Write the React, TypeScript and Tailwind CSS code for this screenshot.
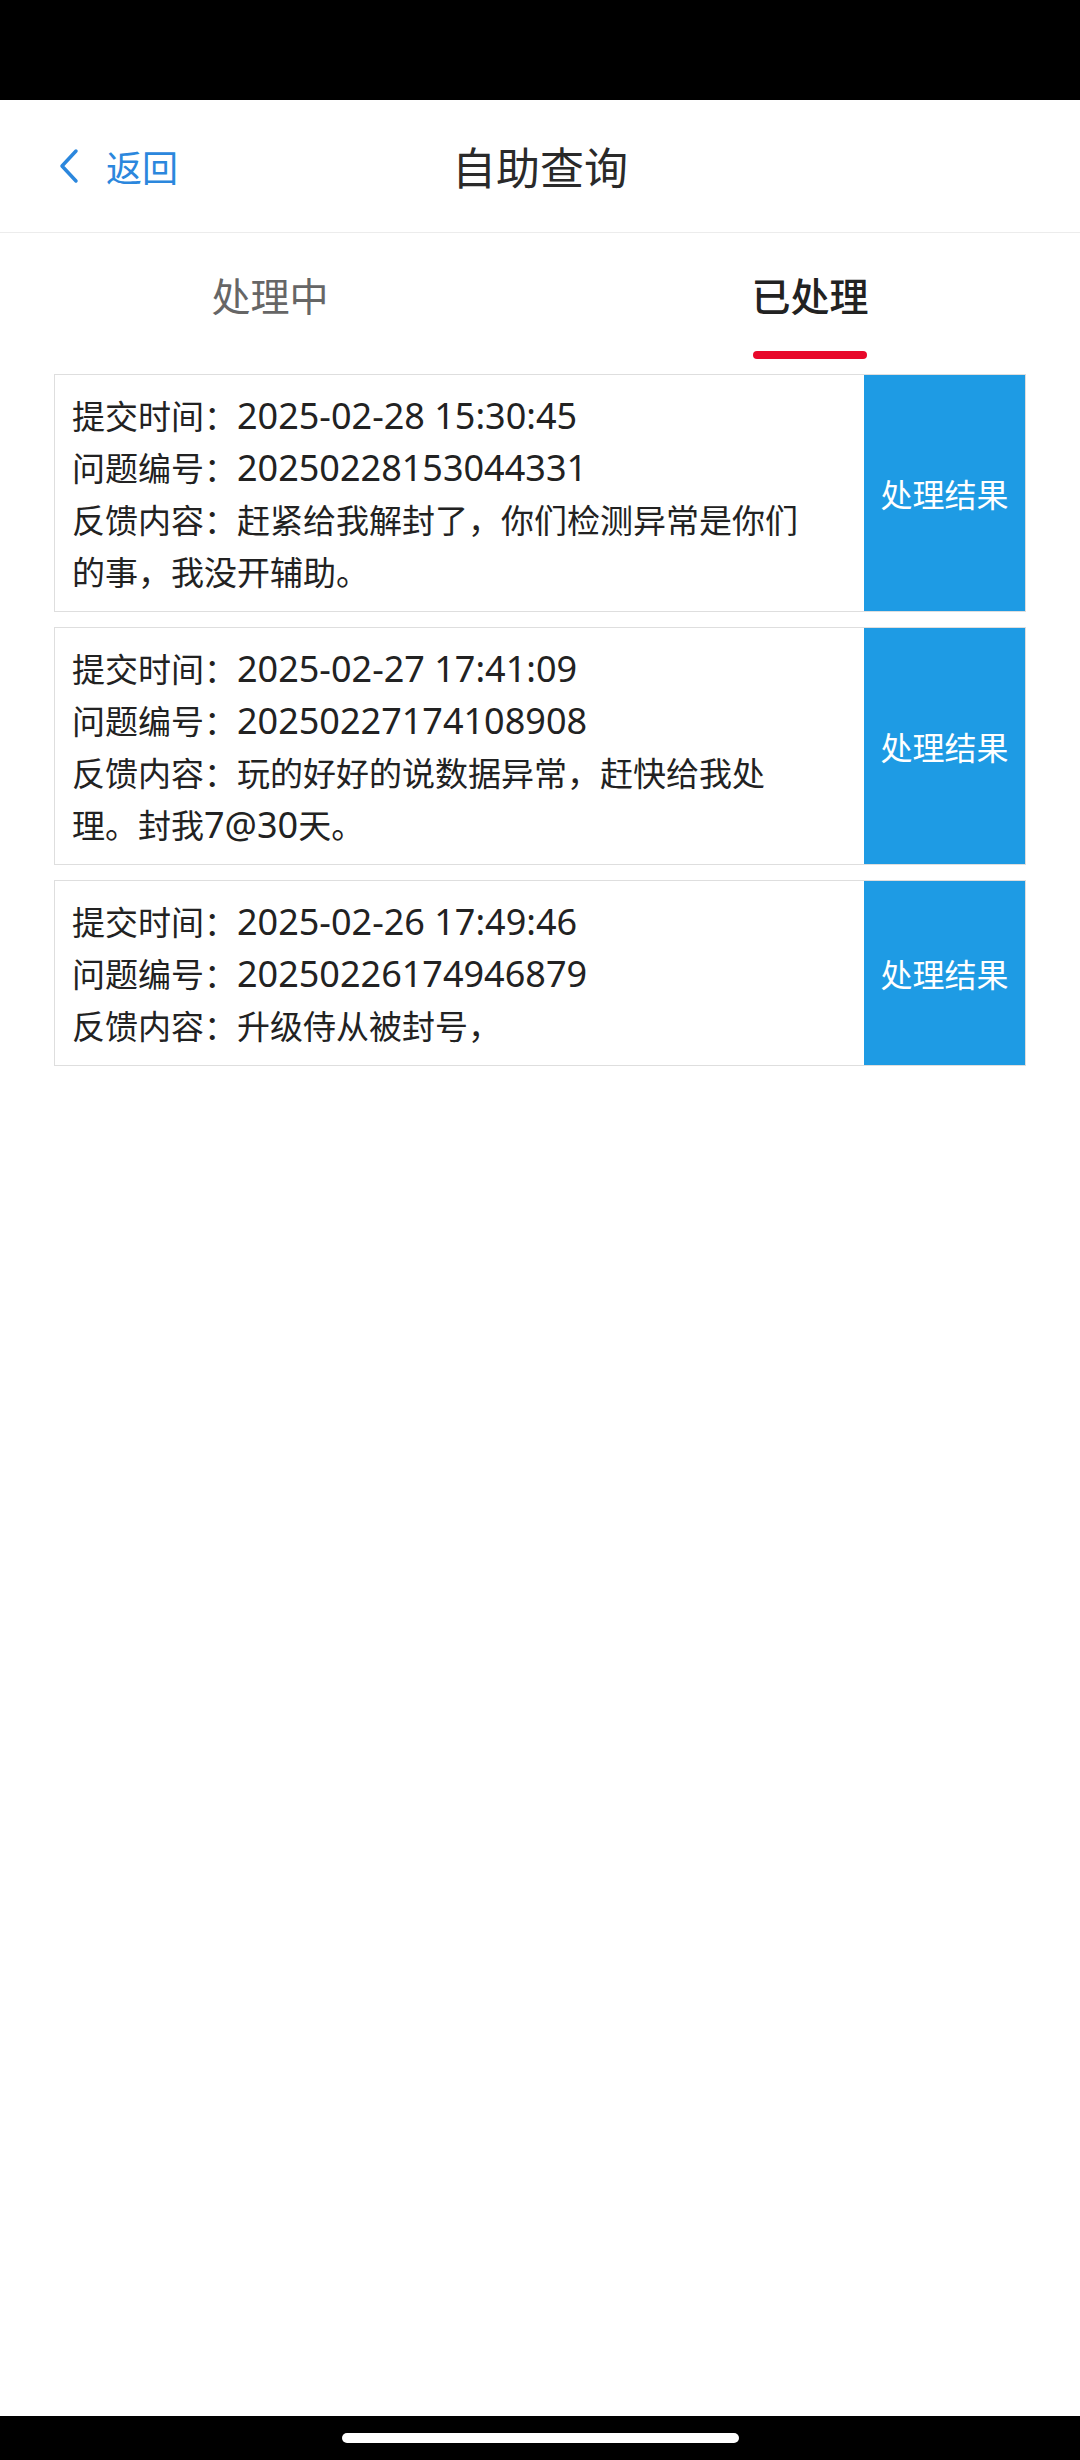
import React from 'react';

const Num = ({ children }: { children: React.ReactNode }) => (
  <span className="text-[36px] leading-[40px]" style={{ fontFamily: '"Noto Sans", "Noto Sans CJK SC", sans-serif' }}>
    {children}
  </span>
);

const records = [
  {
    time: '2025-02-28 15:30:45',
    id: '20250228153044331',
    content: <>赶紧给我解封了，你们检测异常是你们的事，我没开辅助。</>,
  },
  {
    time: '2025-02-27 17:41:09',
    id: '20250227174108908',
    content: (
      <>
        玩的好好的说数据异常，赶快给我处理。封我<Num>7@30</Num>天。
      </>
    ),
  },
  {
    time: '2025-02-26 17:49:46',
    id: '20250226174946879',
    content: <>升级侍从被封号，</>,
  },
];

function RecordCard({ time, id, content }: { time: string; id: string; content: React.ReactNode }) {
  return (
    <div className="flex border border-[#dedede] bg-white">
      <div className="flex-1 pl-[17px] py-[14px] text-[33px] leading-[52px] text-[#222]">
        <div className="w-[745px]">
          <p>
            提交时间：<Num>{time}</Num>
          </p>
          <p>
            问题编号：<Num>{id}</Num>
          </p>
          <p>反馈内容：{content}</p>
        </div>
      </div>
      <button className="w-[161px] shrink-0 bg-[#1e9be4] text-white text-[32px] flex items-center justify-center">
        处理结果
      </button>
    </div>
  );
}

export default function App() {
  return (
    <div
      className="min-h-[2460px] flex flex-col bg-white"
      style={{ fontFamily: '"Noto Sans CJK SC", "Noto Sans", sans-serif' }}
    >
      <div className="h-[100px] bg-black" />

      <div className="h-[133px] grid grid-cols-[1fr_auto_1fr] items-center border-b border-[#ececec]">
        <div className="flex items-center pl-[58px] gap-[26px] text-[#2b87dd]">
          <svg width="22" height="36" viewBox="0 0 22 36" fill="none">
            <path d="M18 3 L4 18 L18 33" stroke="#2b87dd" strokeWidth="3.5" strokeLinecap="round" strokeLinejoin="round" />
          </svg>
          <span className="text-[36px] leading-none">返回</span>
        </div>
        <h1 className="text-[44px] leading-none text-[#2a2a2a]">自助查询</h1>
        <div />
      </div>

      <div className="grid grid-cols-2">
        <div className="flex flex-col items-center pt-[41px]">
          <span className="text-[39px] leading-[40px] text-[#666]">处理中</span>
          <div className="mt-[37px] h-[8px]" />
        </div>
        <div className="flex flex-col items-center pt-[41px]">
          <span className="text-[39px] leading-[40px] text-[#222] font-medium">已处理</span>
          <div className="mt-[37px] h-[8px] w-[114px] rounded-full bg-[#e8082a]" />
        </div>
      </div>

      <div className="mt-[15px] px-[54px] flex flex-col gap-[15px]">
        {records.map((r) => (
          <RecordCard key={r.id} {...r} />
        ))}
      </div>

      <div className="flex-1" />

      <div className="h-[44px] bg-black flex justify-center pt-[17px]">
        <div className="w-[397px] h-[10px] rounded-full bg-white" />
      </div>
    </div>
  );
}
